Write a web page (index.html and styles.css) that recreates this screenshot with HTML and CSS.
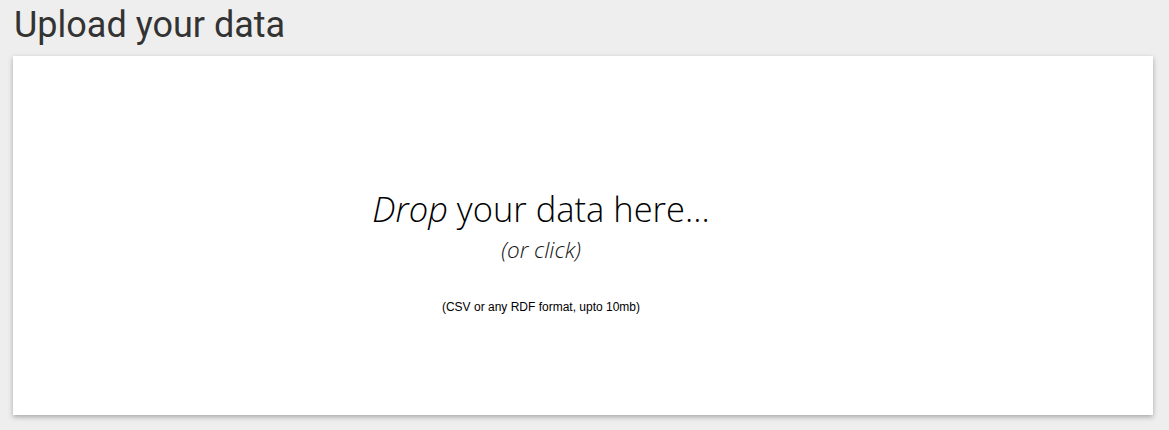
FILE: index.html
```html
<!DOCTYPE html>
<html>
<head>
<meta charset="utf-8">
<link rel="stylesheet" href="styles.css">
</head>
<body>
<div class="page">
  <h1 class="title">Upload your data</h1>
  <div class="card">
    <div class="dropzone">
      <div class="drop-main"><em>Drop</em> your data here...</div>
      <div class="drop-sub">(or click)</div>
      <div class="drop-note">(CSV or any RDF format, upto 10mb)</div>
    </div>
  </div>
</div>
</body>
</html>
```

FILE: styles.css
```css
html, body {
  margin: 0;
  padding: 0;
  background: #eeeeee;
}
.page {
  padding: 0 16px 0 13px;
  height: 430px;
  box-sizing: border-box;
}
.title {
  margin: 0;
  padding: 2px 0 0 1px;
  height: 56px;
  box-sizing: border-box;
  font-family: Roboto, "Liberation Sans", sans-serif;
  font-weight: 400;
  font-size: 36px;
  line-height: 46px;
  color: #333333;
}
.card {
  background: #ffffff;
  height: 359px;
  box-shadow: 0 2px 5px rgba(0, 0, 0, 0.3);
  display: flex;
  justify-content: center;
}
.dropzone {
  margin-right: 84px;
  padding-top: 131px;
  text-align: center;
  color: #111111;
  font-family: "Open Sans", "Noto Sans", sans-serif;
}
.drop-main {
  font-size: 34.5px;
  font-weight: 300;
  line-height: 44px;
  color: #000;
}
.drop-main em {
  font-style: italic;
}
.drop-sub {
  font-size: 22.5px;
  font-style: italic;
  font-weight: 300;
  line-height: 28px;
  margin-top: 5px;
}
.drop-note {
  margin-top: 36px;
  font-family: "Liberation Sans", Arial, sans-serif;
  font-size: 12px;
  line-height: 14px;
  color: #000;
}
```
